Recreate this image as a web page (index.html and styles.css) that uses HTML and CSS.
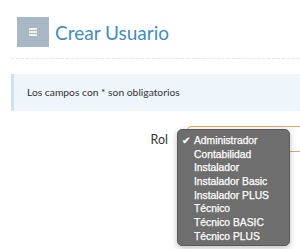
FILE: index.html
```html
<!DOCTYPE html>
<html lang="es">
<head>
    <meta charset="UTF-8">
    <meta name="viewport" content="width=device-width, initial-scale=1.0">
    <title>Crear Usuario</title>
    <link rel="stylesheet" href="styles.css">
</head>
<body>
    <div class="page">
        <div class="header">
            <button class="menu-btn" type="button">
                <span></span><span></span><span></span>
            </button>
            <h1>Crear Usuario</h1>
        </div>
        <div class="divider"></div>

        <div class="alert">Los campos con * son obligatorios</div>

        <form class="form">
            <div class="row">
                <label for="rol">Rol</label>
                <div class="select-wrap">
                    <div class="select" id="rol"></div>
                    <ul class="dropdown">
                        <li class="checked">Administrador</li>
                        <li>Contabilidad</li>
                        <li>Instalador</li>
                        <li>Instalador Basic</li>
                        <li>Instalador PLUS</li>
                        <li>Técnico</li>
                        <li>Técnico BASIC</li>
                        <li>Técnico PLUS</li>
                    </ul>
                </div>
            </div>
        </form>
    </div>
</body>
</html>
```

FILE: styles.css
```css
body {
    margin: 0;
    font-family: Lato, "Open Sans", sans-serif;
    background: #fff;
    color: #333;
}
.page {
    padding-left: 11px;
    min-height: 249px;
    box-sizing: border-box;
}
.header {
    display: flex;
    align-items: center;
    padding: 17px 0 0 6px;
    height: 30px;
}
.menu-btn {
    width: 32px;
    height: 30px;
    background: #aab8c5;
    border: none;
    padding: 0;
    display: flex;
    flex-direction: column;
    justify-content: center;
    align-items: center;
    gap: 1.5px;
}
.menu-btn span {
    display: block;
    width: 8px;
    height: 1.5px;
    background: #eef2f5;
}
h1 {
    margin: 0 0 0 6px;
    font-family: Lato, "Open Sans", sans-serif;
    font-weight: 400;
    font-size: 19px;
    color: #3f8ccb;
}
.divider {
    margin-top: 11px;
    border-top: 1px dashed #e6e6e6;
}
.alert {
    margin-top: 15px;
    height: 37px;
    line-height: 37px;
    background: #eef5fb;
    border-left: 3px solid #cfe1f1;
    padding-left: 13px;
    font-size: 10.3px;
    color: #333;
}
.form {
    margin-top: 15px;
}
.row {
    display: flex;
    align-items: flex-start;
}
.row label {
    width: 157px;
    text-align: right;
    font-size: 12.5px;
    padding-top: 6px;
    color: #333;
}
.select-wrap {
    position: relative;
    margin-left: 9px;
    flex: 1;
}
.select {
    margin-left: 10px;
    height: 24px;
    border: 1px solid #f0a461;
    border-radius: 4px;
    margin-right: -10px;
}
.dropdown {
    position: absolute;
    left: 0;
    top: 3px;
    width: 113px;
    height: 117px;
    box-sizing: border-box;
    margin: 0;
    padding: 4px 0 0 0;
    list-style: none;
    background: #6e6e6e;
    border: 1px solid #5a5a5a;
    border-radius: 5px;
    box-shadow: 0 2px 6px rgba(0, 0, 0, 0.25);
    font-family: "Liberation Sans", Arial, sans-serif;
    font-size: 10.3px;
    color: #fff;
    -webkit-text-stroke: 0.25px #fff;
}
.dropdown li {
    height: 13.7px;
    line-height: 13.7px;
    padding-left: 16px;
    position: relative;
}
.dropdown li.checked::before {
    content: "\2714";
    position: absolute;
    left: 4px;
    top: 0;
    font-family: "DejaVu Sans", sans-serif;
    font-size: 10px;
}
```
